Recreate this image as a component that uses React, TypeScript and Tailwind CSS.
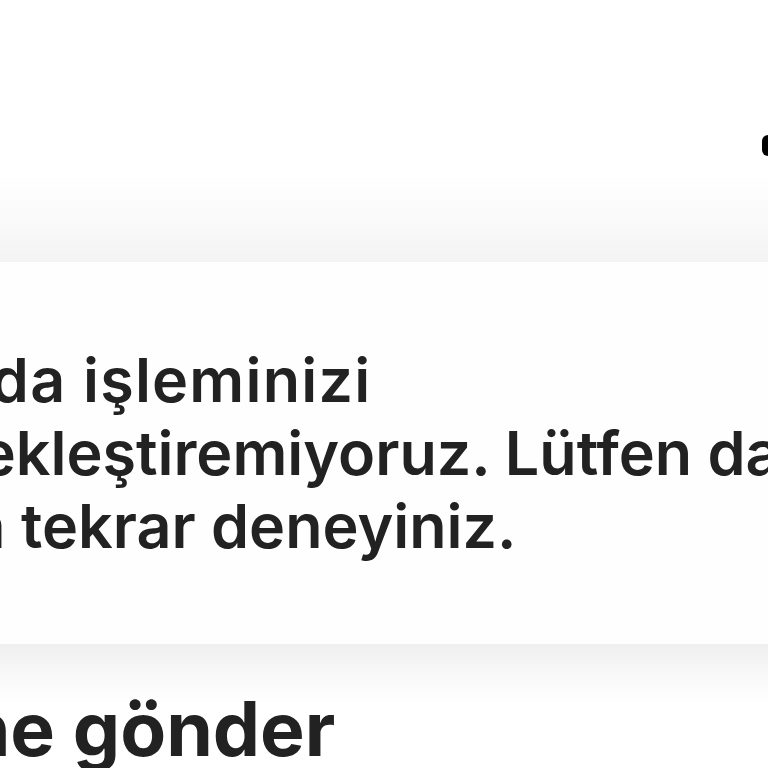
export default function App() {
  return (
    <div className="h-[768px] w-[768px] overflow-hidden bg-[#fefefe] font-['Inter','Noto_Sans',sans-serif] text-[#222222]">
      <header className="flex h-[262px] justify-end overflow-hidden bg-[linear-gradient(to_bottom,#ffffff_0px,#ffffff_170px,#f9f9f9_225px,#f3f3f3_262px)] pt-[135px]">
        <div className="-mr-[24px] h-[21px] w-[30px] rounded-[6px] bg-black" />
      </header>

      <section className="h-[382px] overflow-hidden pt-[82px]">
        <p className="flex flex-col text-[61px] font-semibold leading-[73px] whitespace-nowrap">
          <span className="-ml-[180px] tracking-[0.02em]">Şu anda işleminizi</span>
          <span className="-ml-[153px]">gerçekleştiremiyoruz. Lütfen daha</span>
          <span className="-ml-[161px]">sonra tekrar deneyiniz.</span>
        </p>
      </section>

      <section className="h-[124px] overflow-hidden bg-[linear-gradient(to_bottom,#efefef_0px,#f8f8f8_30px,#ffffff_60px)] pt-[47px]">
        <button className="-ml-[486px] whitespace-nowrap text-[75px] font-bold leading-none">
          Destek ekibine gönder
        </button>
      </section>
    </div>
  );
}
